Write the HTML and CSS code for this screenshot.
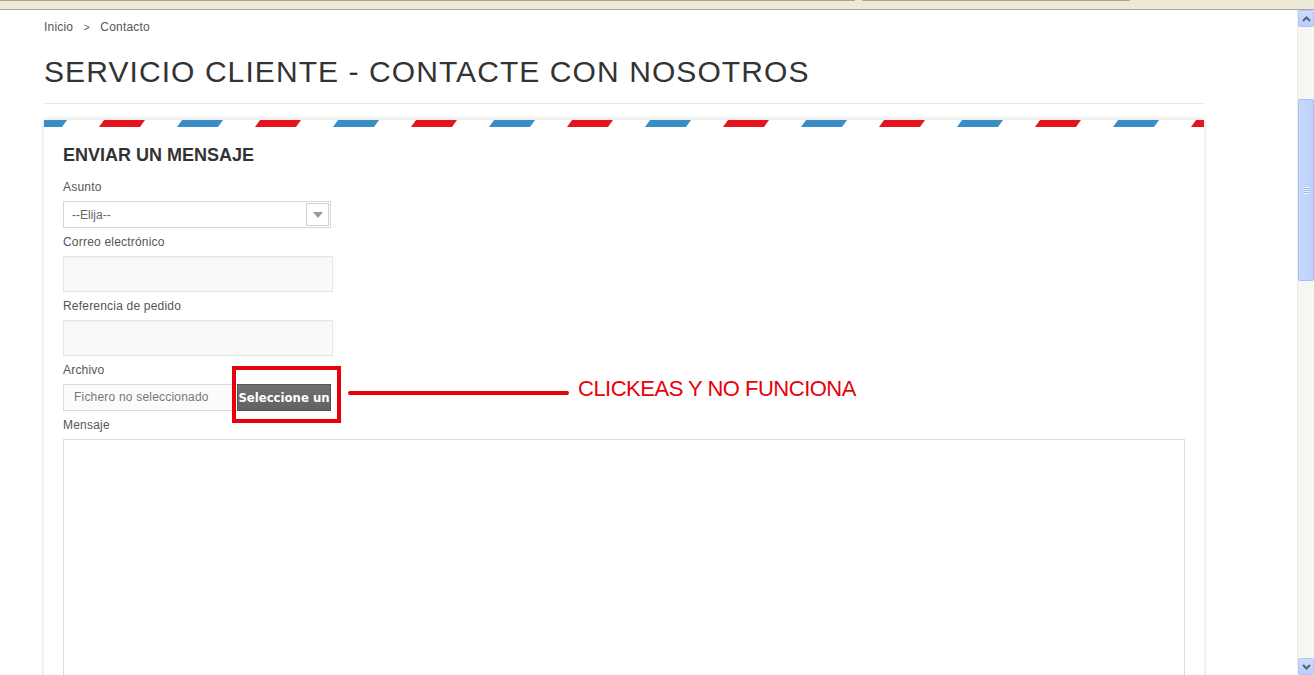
FILE: index.html
```html
<!DOCTYPE html>
<html lang="es">
<head>
    <meta charset="UTF-8">
    <meta name="viewport" content="width=device-width, initial-scale=1.0">
    <title>Servicio cliente - Contacte con nosotros</title>
    <link rel="stylesheet" href="styles.css">
</head>
<body>
    <div class="chrome-top">
        <span class="tab tab-one"></span>
        <span class="tab tab-two"></span>
    </div>
    <div class="viewport">
        <main class="page">
            <div class="breadcrumb">Inicio <span class="sep">&gt;</span> Contacto</div>
            <h1 class="page-heading">SERVICIO CLIENTE - CONTACTE CON NOSOTROS</h1>

            <div class="contact-box">
                <div class="airmail">
                    <svg width="1160" height="7" viewBox="0 0 1160 7">
                        <defs>
                            <pattern id="airmailStripes" x="-23" y="0" width="156" height="7" patternUnits="userSpaceOnUse">
                                <polygon points="0,7 41,7 46,0 5,0" fill="#3a8bc6"/>
                                <polygon points="78,7 119,7 124,0 83,0" fill="#e2161c"/>
                            </pattern>
                        </defs>
                        <rect width="1160" height="7" fill="url(#airmailStripes)"/>
                    </svg>
                </div>

                <div class="contact-body">
                    <h3 class="box-title">ENVIAR UN MENSAJE</h3>

                    <div class="form-group">
                        <label>Asunto</label>
                        <div class="selector">
                            <span class="selector-text">--Elija--</span>
                            <span class="selector-arrow"><span class="caret"></span></span>
                        </div>
                    </div>

                    <div class="form-group">
                        <label for="email">Correo electrónico</label>
                        <input class="form-control" type="text" id="email">
                    </div>

                    <div class="form-group">
                        <label for="id_order">Referencia de pedido</label>
                        <input class="form-control" type="text" id="id_order">
                    </div>

                    <div class="form-group">
                        <label>Archivo</label>
                        <div class="uploader">
                            <span class="filename">Fichero no seleccionado</span>
                            <span class="action">Seleccione un</span>
                        </div>
                    </div>

                    <div class="form-group">
                        <label for="message">Mensaje</label>
                        <textarea class="message" id="message"></textarea>
                    </div>
                </div>

                <!-- anotacion en rojo sobre el boton -->
                <div class="note-box"></div>
                <div class="note-line"></div>
                <div class="note-text">CLICKEAS Y NO FUNCIONA</div>
            </div>
        </main>

        <div class="scrollbar">
            <div class="sb-btn">
                <svg width="9" height="6" viewBox="0 0 9 6"><path d="M1 5 L4.5 1.5 L8 5" fill="none" stroke="#4d6185" stroke-width="2"/></svg>
            </div>
            <div class="sb-track">
                <div class="sb-thumb"><span class="grip"></span></div>
            </div>
            <div class="sb-btn">
                <svg width="9" height="6" viewBox="0 0 9 6"><path d="M1 1 L4.5 4.5 L8 1" fill="none" stroke="#4d6185" stroke-width="2"/></svg>
            </div>
        </div>
    </div>
</body>
</html>
```

FILE: styles.css
```css
* {
    box-sizing: border-box;
}

body {
    margin: 0;
    height: 675px;
    overflow: hidden;
    font-family: "Liberation Sans", Arial, sans-serif;
    background: #fff;
    display: flex;
    flex-direction: column;
}

/* barra del navegador */
.chrome-top {
    height: 10px;
    background: #ece9d8;
    border-bottom: 1px solid #a9a793;
    display: flex;
    gap: 7px;
}

.tab {
    height: 1px;
    background: #a9a793;
}

.tab-one {
    width: 855px;
}

.tab-two {
    width: 268px;
}

.viewport {
    flex: 1;
    display: flex;
    min-height: 0;
}

.page {
    flex: 1;
    padding-left: 44px;
    overflow: hidden;
}

.breadcrumb {
    margin-top: 9px;
    height: 16px;
    font-size: 12px;
    line-height: 16px;
    color: #555;
    letter-spacing: 0.2px;
}

.breadcrumb .sep {
    display: inline-block;
    margin: 0 7px;
    font-size: 10px;
    line-height: 1;
}

.page-heading {
    width: 1160px;
    margin: 19px 0 16px;
    padding-bottom: 13px;
    border-bottom: 1px solid #e6e6e6;
    font-size: 30px;
    line-height: 36px;
    font-weight: normal;
    letter-spacing: 1.08px;
    color: #333;
}

.contact-box {
    position: relative;
    width: 1160px;
    height: 600px;
    background: #fff;
    box-shadow: 0 0 5px rgba(0, 0, 0, 0.16);
}

.airmail {
    height: 7px;
    display: flex;
}

.contact-body {
    padding: 17px 19px 0;
}

.box-title {
    margin: 0 0 13px;
    font-size: 18px;
    line-height: 22px;
    font-weight: bold;
    color: #333;
}

.form-group {
    margin-bottom: 6px;
}

.form-group label {
    display: block;
    margin-bottom: 6px;
    font-size: 12px;
    line-height: 16px;
    color: #555;
    letter-spacing: 0.2px;
}

.selector {
    width: 268px;
    height: 27px;
    border: 1px solid #d6d6d6;
    background: #fff;
    display: flex;
    align-items: center;
    justify-content: space-between;
    padding: 0 1px 0 8px;
}

.selector-text {
    font-size: 12px;
    color: #666;
}

.selector-arrow {
    width: 23px;
    height: 23px;
    border: 1px solid #d0d0d0;
    display: flex;
    align-items: center;
    justify-content: center;
}

.caret {
    width: 0;
    height: 0;
    border-left: 5px solid transparent;
    border-right: 5px solid transparent;
    border-top: 6px solid #9a9a9a;
}

.form-control {
    display: block;
    width: 270px;
    height: 36px;
    margin: 0;
    border: 1px solid #e6e6e6;
    background: #f9f9f9;
    box-shadow: inset 0 1px 1px rgba(0, 0, 0, 0.03);
    font-family: inherit;
}

.uploader {
    width: 268px;
    height: 27px;
    display: flex;
}

.filename {
    flex: 1;
    border: 1px solid #dcdcdc;
    border-right: none;
    background: #fbfbfb;
    padding-left: 10px;
    font-size: 12px;
    line-height: 25px;
    color: #777;
    letter-spacing: 0.2px;
    white-space: nowrap;
    overflow: hidden;
}

.action {
    width: 94px;
    background: linear-gradient(#707070, #626262);
    border: 1px solid #555;
    color: #fff;
    font-family: "DejaVu Sans Condensed", "DejaVu Sans", sans-serif;
    font-weight: bold;
    font-size: 13px;
    line-height: 25px;
    text-align: center;
    white-space: nowrap;
    overflow: hidden;
}

.message {
    display: block;
    width: 1122px;
    height: 320px;
    margin: 0;
    border: 1px solid #dcdcdc;
    background: #fff;
    resize: none;
}

/* anotacion */
.note-box {
    position: absolute;
    left: 188px;
    top: 246px;
    width: 109px;
    height: 57px;
    border: 4px solid #e8000b;
}

.note-line {
    position: absolute;
    left: 304px;
    top: 271px;
    width: 221px;
    height: 4px;
    border-radius: 2px;
    background: #e8000b;
}

.note-text {
    position: absolute;
    left: 534px;
    top: 257px;
    font-size: 22px;
    line-height: 24px;
    letter-spacing: -0.5px;
    color: #e8000b;
    white-space: nowrap;
}

/* barra de desplazamiento estilo XP */
.scrollbar {
    width: 17px;
    display: flex;
    flex-direction: column;
    background: #f7f6f1;
    border-left: 1px solid #eeede5;
}

.sb-btn {
    height: 17px;
    background: linear-gradient(#cfdcfd, #b9cdfb);
    border: 1px solid #b3c6f3;
    border-radius: 2px;
    display: flex;
    align-items: center;
    justify-content: center;
}

.sb-track {
    flex: 1;
}

.sb-thumb {
    margin-top: 72px;
    height: 182px;
    background: linear-gradient(90deg, #c7d8fd, #bcd0fb);
    border: 1px solid #a9bff0;
    border-radius: 2px;
    display: flex;
    align-items: center;
    justify-content: center;
}

.grip {
    width: 7px;
    height: 7px;
    background: repeating-linear-gradient(#eef3ff 0 1px, #9fb5e6 1px 2px);
}
```
